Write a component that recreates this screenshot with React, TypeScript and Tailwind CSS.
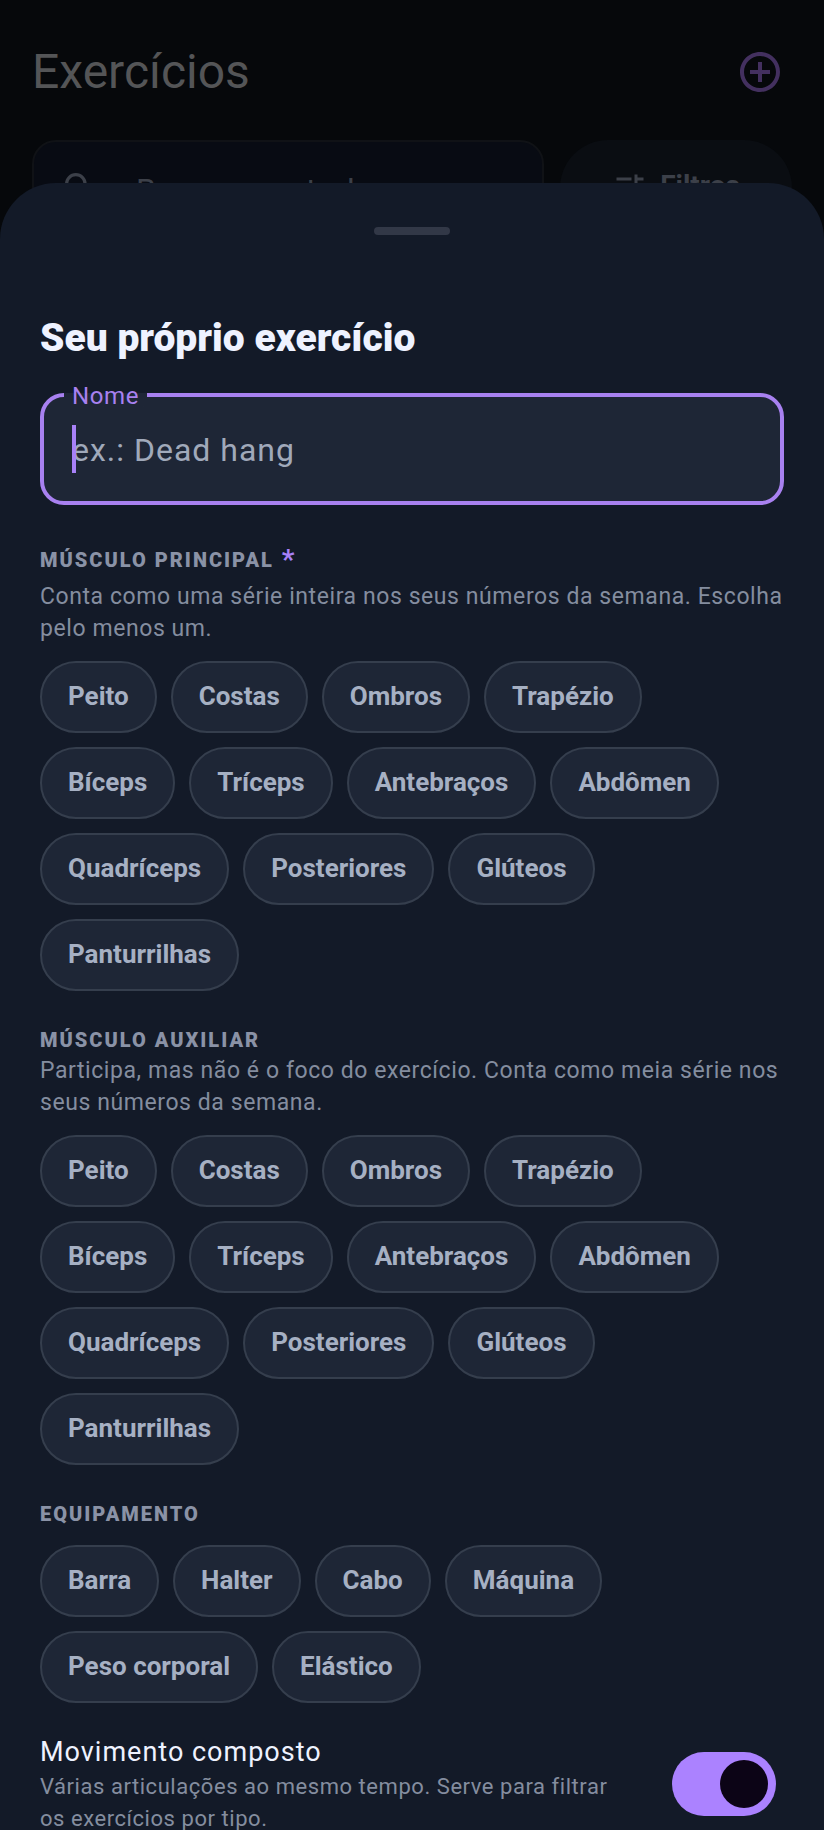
import { useState } from "react";
import { MdAddCircleOutline, MdSearch, MdTune } from "react-icons/md";

const muscles = [
  "Peito",
  "Costas",
  "Ombros",
  "Trapézio",
  "Bíceps",
  "Tríceps",
  "Antebraços",
  "Abdômen",
  "Quadríceps",
  "Posteriores",
  "Glúteos",
  "Panturrilhas",
];

const equipment = [
  "Barra",
  "Halter",
  "Cabo",
  "Máquina",
  "Peso corporal",
  "Elástico",
];

const ChipGroup = ({ label, options }: { label: string; options: string[] }) => {
  const [selected, setSelected] = useState<string[]>([]);

  const toggle = (option: string) =>
    setSelected((prev) =>
      prev.includes(option)
        ? prev.filter((item) => item !== option)
        : [...prev, option]
    );

  return (
    <div role="group" aria-label={label} className="flex flex-wrap gap-[14px] pr-8">
      {options.map((option) => (
        <button
          key={option}
          type="button"
          aria-pressed={selected.includes(option)}
          onClick={() => toggle(option)}
          className="h-[72px] px-[26px] pb-0.5 rounded-full border-2 border-[#353e4d] bg-[#1e2636] text-[26px] leading-8 font-bold text-[#a6b0c3] aria-pressed:border-[#a881f8] aria-pressed:text-white"
        >
          {option}
        </button>
      ))}
    </div>
  );
};

const SectionTitle = ({ children }: { children: string }) => (
  <h3 className="text-xl leading-[30px] font-black uppercase tracking-widest text-[#8a92a6]">
    {children}
  </h3>
);

const Hint = ({ children }: { children: string }) => (
  <p className="text-[23px] leading-8 tracking-wide text-[#848d9f]">{children}</p>
);

const ExercisesPage = () => (
  <div aria-hidden="true" className="px-8">
    <header className="flex items-center justify-between h-[140px] pt-1 pr-2">
      <h1 className="text-5xl text-[#545557]">Exercícios</h1>
      <button type="button" tabIndex={-1} className="text-[#43305f]">
        <MdAddCircleOutline size={48} />
      </button>
    </header>
    <div className="flex gap-4">
      <div className="flex flex-1 min-w-0 items-center gap-9 h-24 px-[26px] rounded-3xl border-2 border-[#101216] bg-[#080b13] text-[#3c4049]">
        <MdSearch size={40} className="shrink-0" />
        <input
          type="text"
          tabIndex={-1}
          aria-label="Buscar em todos"
          placeholder="Buscar em todos"
          className="flex-1 min-w-0 pt-1 bg-transparent text-[32px] tracking-[1px] placeholder:text-[#3c4049]"
        />
      </div>
      <button
        type="button"
        tabIndex={-1}
        className="flex items-center justify-center gap-3 shrink-0 w-[232px] h-24 rounded-full bg-[#0a0d12] text-[28px] font-bold text-[#3c4049]"
      >
        <MdTune size={36} />
        <span className="pb-1">Filtros</span>
      </button>
    </div>
  </div>
);

export default function App() {
  const [name, setName] = useState("");
  const [compound, setCompound] = useState(true);

  return (
    <div className="relative h-screen overflow-hidden bg-[#06080b] font-['Roboto',sans-serif]">
      <ExercisesPage />

      {/* Bottom sheet */}
      <div className="absolute inset-0 flex flex-col pt-[183px]">
        <section
          role="dialog"
          aria-labelledby="sheet-title"
          className="flex-1 min-h-0 overflow-hidden rounded-t-[56px] bg-[#131a28] px-10 pt-11"
        >
          <div className="mx-auto w-[76px] h-2 rounded-full bg-[#323847]" />

          <h2
            id="sheet-title"
            className="mt-20 text-[39px] leading-[46px] font-black text-[#eef2ff]"
          >
            Seu próprio exercício
          </h2>

          <div className="relative mt-8">
            <input
              id="exercise-name"
              type="text"
              value={name}
              onChange={(e) => setName(e.target.value)}
              placeholder="ex.: Dead hang"
              className="block w-full h-28 px-7 pt-0.5 rounded-3xl border-4 border-[#a881f0] bg-[#1e2636] text-[32px] tracking-[1px] text-[#eef2ff] caret-[#a881f8] outline-none placeholder:text-[#a0a9ba]"
            />
            <label
              htmlFor="exercise-name"
              className="absolute left-6 -top-3 px-2 text-2xl leading-[30px] tracking-wide text-[#a881f0] bg-linear-to-b from-[#131a28] from-40% to-[#1e2636] to-40%"
            >
              Nome
            </label>
            {name === "" && (
              <span className="absolute left-8 top-8 w-1 h-12 bg-[#a881f8]" />
            )}
          </div>

          <div className="mt-[34px]">
            <div className="flex items-center gap-2 h-[42px]">
              <SectionTitle>Músculo principal</SectionTitle>
              <span className="text-[28px] leading-[30px] font-bold text-[#a881f8]">*</span>
            </div>
            <Hint>
              Conta como uma série inteira nos seus números da semana. Escolha pelo menos um.
            </Hint>
            <div className="mt-4">
              <ChipGroup label="Músculo principal" options={muscles} />
            </div>
          </div>

          <div className="mt-[34px]">
            <SectionTitle>Músculo auxiliar</SectionTitle>
            <Hint>
              Participa, mas não é o foco do exercício. Conta como meia série nos seus números da semana.
            </Hint>
            <div className="mt-4">
              <ChipGroup label="Músculo auxiliar" options={muscles} />
            </div>
          </div>

          <div className="mt-[34px]">
            <SectionTitle>Equipamento</SectionTitle>
            <div className="mt-4">
              <ChipGroup label="Equipamento" options={equipment} />
            </div>
          </div>

          <div className="flex items-center gap-14 mt-[30px] pr-2">
            <div className="flex-1">
              <label
                htmlFor="compound"
                className="block text-[27px] leading-[38px] tracking-[1px] text-[#eef2ff]"
              >
                Movimento composto
              </label>
              <p className="text-[22px] leading-8 tracking-wide text-[#848d9f]">
                Várias articulações ao mesmo tempo. Serve para filtrar os exercícios por tipo.
              </p>
            </div>
            <input
              id="compound"
              type="checkbox"
              role="switch"
              checked={compound}
              onChange={(e) => setCompound(e.target.checked)}
              className="flex items-center w-[104px] h-16 px-2 shrink-0 appearance-none rounded-full bg-[#353e4d] checked:justify-end checked:bg-[#ab82ff] before:size-12 before:rounded-full before:bg-[#0c0416]"
            />
          </div>
        </section>
      </div>
    </div>
  );
}
